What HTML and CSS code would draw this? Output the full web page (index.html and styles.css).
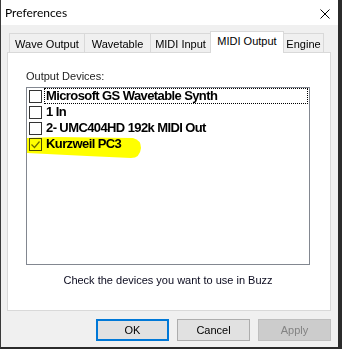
FILE: index.html
```html
<!doctype html>
<html>
<head>
  <link rel="stylesheet" href="styles.css">
</head>
<body>
  <div class="window">
    <div class="titlebar">
      <span class="title">Preferences</span>
      <svg class="close" width="10" height="10" viewBox="0 0 10 10">
        <path d="M0.5 0.5 L9.5 9.5 M9.5 0.5 L0.5 9.5" stroke="#000" stroke-width="1" fill="none"/>
      </svg>
    </div>

    <div class="content">
      <div class="tabs">
        <div class="tab tab-wave">Wave Output</div>
        <div class="tab tab-table">Wavetable</div>
        <div class="tab tab-in">MIDI Input</div>
        <div class="tab tab-out selected">MIDI Output</div>
        <div class="tab tab-engine">Engine</div>
      </div>

      <div class="panel">
        <div class="label">Output Devices:</div>
        <ul class="list">
          <li class="item"><span class="check"></span><span class="name focus">Microsoft GS Wavetable Synth</span></li>
          <li class="item"><span class="check"></span><span class="name">1 In</span></li>
          <li class="item"><span class="check"></span><span class="name">2- UMC404HD 192k MIDI Out</span></li>
          <li class="item"><span class="check checked">
            <svg width="11" height="11" viewBox="0 0 11 11"><path d="M1.5 5.5 L4.5 8.5 L9.5 2.5" stroke="#6e6e3c" stroke-width="1.2" fill="none"/></svg>
          </span><span class="name">Kurzweil PC3</span></li>
          <!-- highlighter mark drawn over the last entry -->
          <svg class="marker" width="120" height="24" viewBox="0 0 120 24">
            <path d="M0 1 L30 0 L106 1 Q114 3 114 11 Q113 21 104 21 L60 19 L20 17 L0 16 Z" fill="#ffff00"/>
          </svg>
        </ul>
        <p class="hint">Check the devices you want to use in Buzz</p>
      </div>

      <div class="buttons">
        <button class="btn default">OK</button>
        <button class="btn">Cancel</button>
        <button class="btn" disabled>Apply</button>
      </div>
    </div>
  </div>
</body>
</html>
```

FILE: styles.css
```css
* {
  margin: 0;
  padding: 0;
  box-sizing: border-box;
}

body {
  background: #2b2b2b;
  font-family: "Liberation Sans", Arial, sans-serif;
  font-size: 11px;
  color: #000;
}

.window {
  width: 342px;
  height: 349px;
  background: #f0f0f0;
  border-left: 1px solid #3a3a3a;
  border-right: 4px solid #2b2b2b;
  border-bottom: 2px solid #2b2b2b;
  display: flex;
  flex-direction: column;
}

.titlebar {
  height: 25px;
  background: #fff;
  display: flex;
  align-items: center;
  justify-content: space-between;
  padding: 0 8px 0 4px;
}

.title {
  font-family: Lato, "Liberation Sans", sans-serif;
  font-size: 12px;
  color: #000;
}

.close {
  margin-top: 2px;
}

.content {
  padding: 6px 7px 0 6px;
}

.tabs {
  display: flex;
  align-items: flex-end;
  height: 21px;
  padding-left: 2px;
}

.tab {
  height: 19px;
  padding-top: 3px;
  line-height: 14px;
  text-align: center;
  background: #f0f0f0;
  border: 1px solid #d9d9d9;
  border-bottom: none;
  margin-left: -1px;
  color: #000;
}

.tab:first-child {
  margin-left: 0;
}

.tab-wave { width: 76px; }
.tab-table { width: 67px; }
.tab-in { width: 61px; }
.tab-out { width: 74px; }
.tab-engine { width: 41px; }

.tab.selected {
  height: 22px;
  padding-top: 2px;
  margin-bottom: -1px;
  background: #fff;
  position: relative;
  z-index: 1;
}

.panel {
  height: 259px;
  background: #fff;
  border: 1px solid #d9d9d9;
  padding: 17px 20px 0 18px;
}

.label {
  line-height: 13px;
  color: #1e1e1e;
}

.list {
  list-style: none;
  position: relative;
  margin-top: 4px;
  height: 178px;
  border: 1px solid #828790;
}

.item {
  display: flex;
  align-items: center;
  height: 16px;
  padding-left: 2px;
}

.check {
  width: 13px;
  height: 13px;
  border: 1px solid #333;
  background: #fff;
  margin-right: 2px;
  display: flex;
  align-items: center;
  justify-content: center;
}

.check.checked {
  border-color: #4a4a20;
}

.name {
  flex: 1;
  height: 16px;
  line-height: 16px;
  font-weight: bold;
  font-size: 13px;
  letter-spacing: -0.6px;
  padding-left: 1px;
  border: 1px dotted transparent;
  display: flex;
  align-items: center;
}

.name.focus {
  border-color: #000;
  margin-right: 1px;
}

.marker {
  position: absolute;
  left: 0;
  top: 49px;
  mix-blend-mode: multiply;
}

.hint {
  margin-top: 9px;
  line-height: 13px;
  text-align: center;
  color: #0a0a1e;
}

.buttons {
  display: flex;
  justify-content: flex-end;
  gap: 8px;
  padding-top: 8px;
}

.btn {
  width: 73px;
  height: 22px;
  font-family: "Liberation Sans", Arial, sans-serif;
  font-size: 11px;
  color: #000;
  background: #e1e1e1;
  border: 1px solid #adadad;
}

.btn.default {
  border: 2px solid #0078d7;
}

.btn:disabled {
  background: #cccccc;
  border-color: #bfbfbf;
  color: #838383;
}
```
